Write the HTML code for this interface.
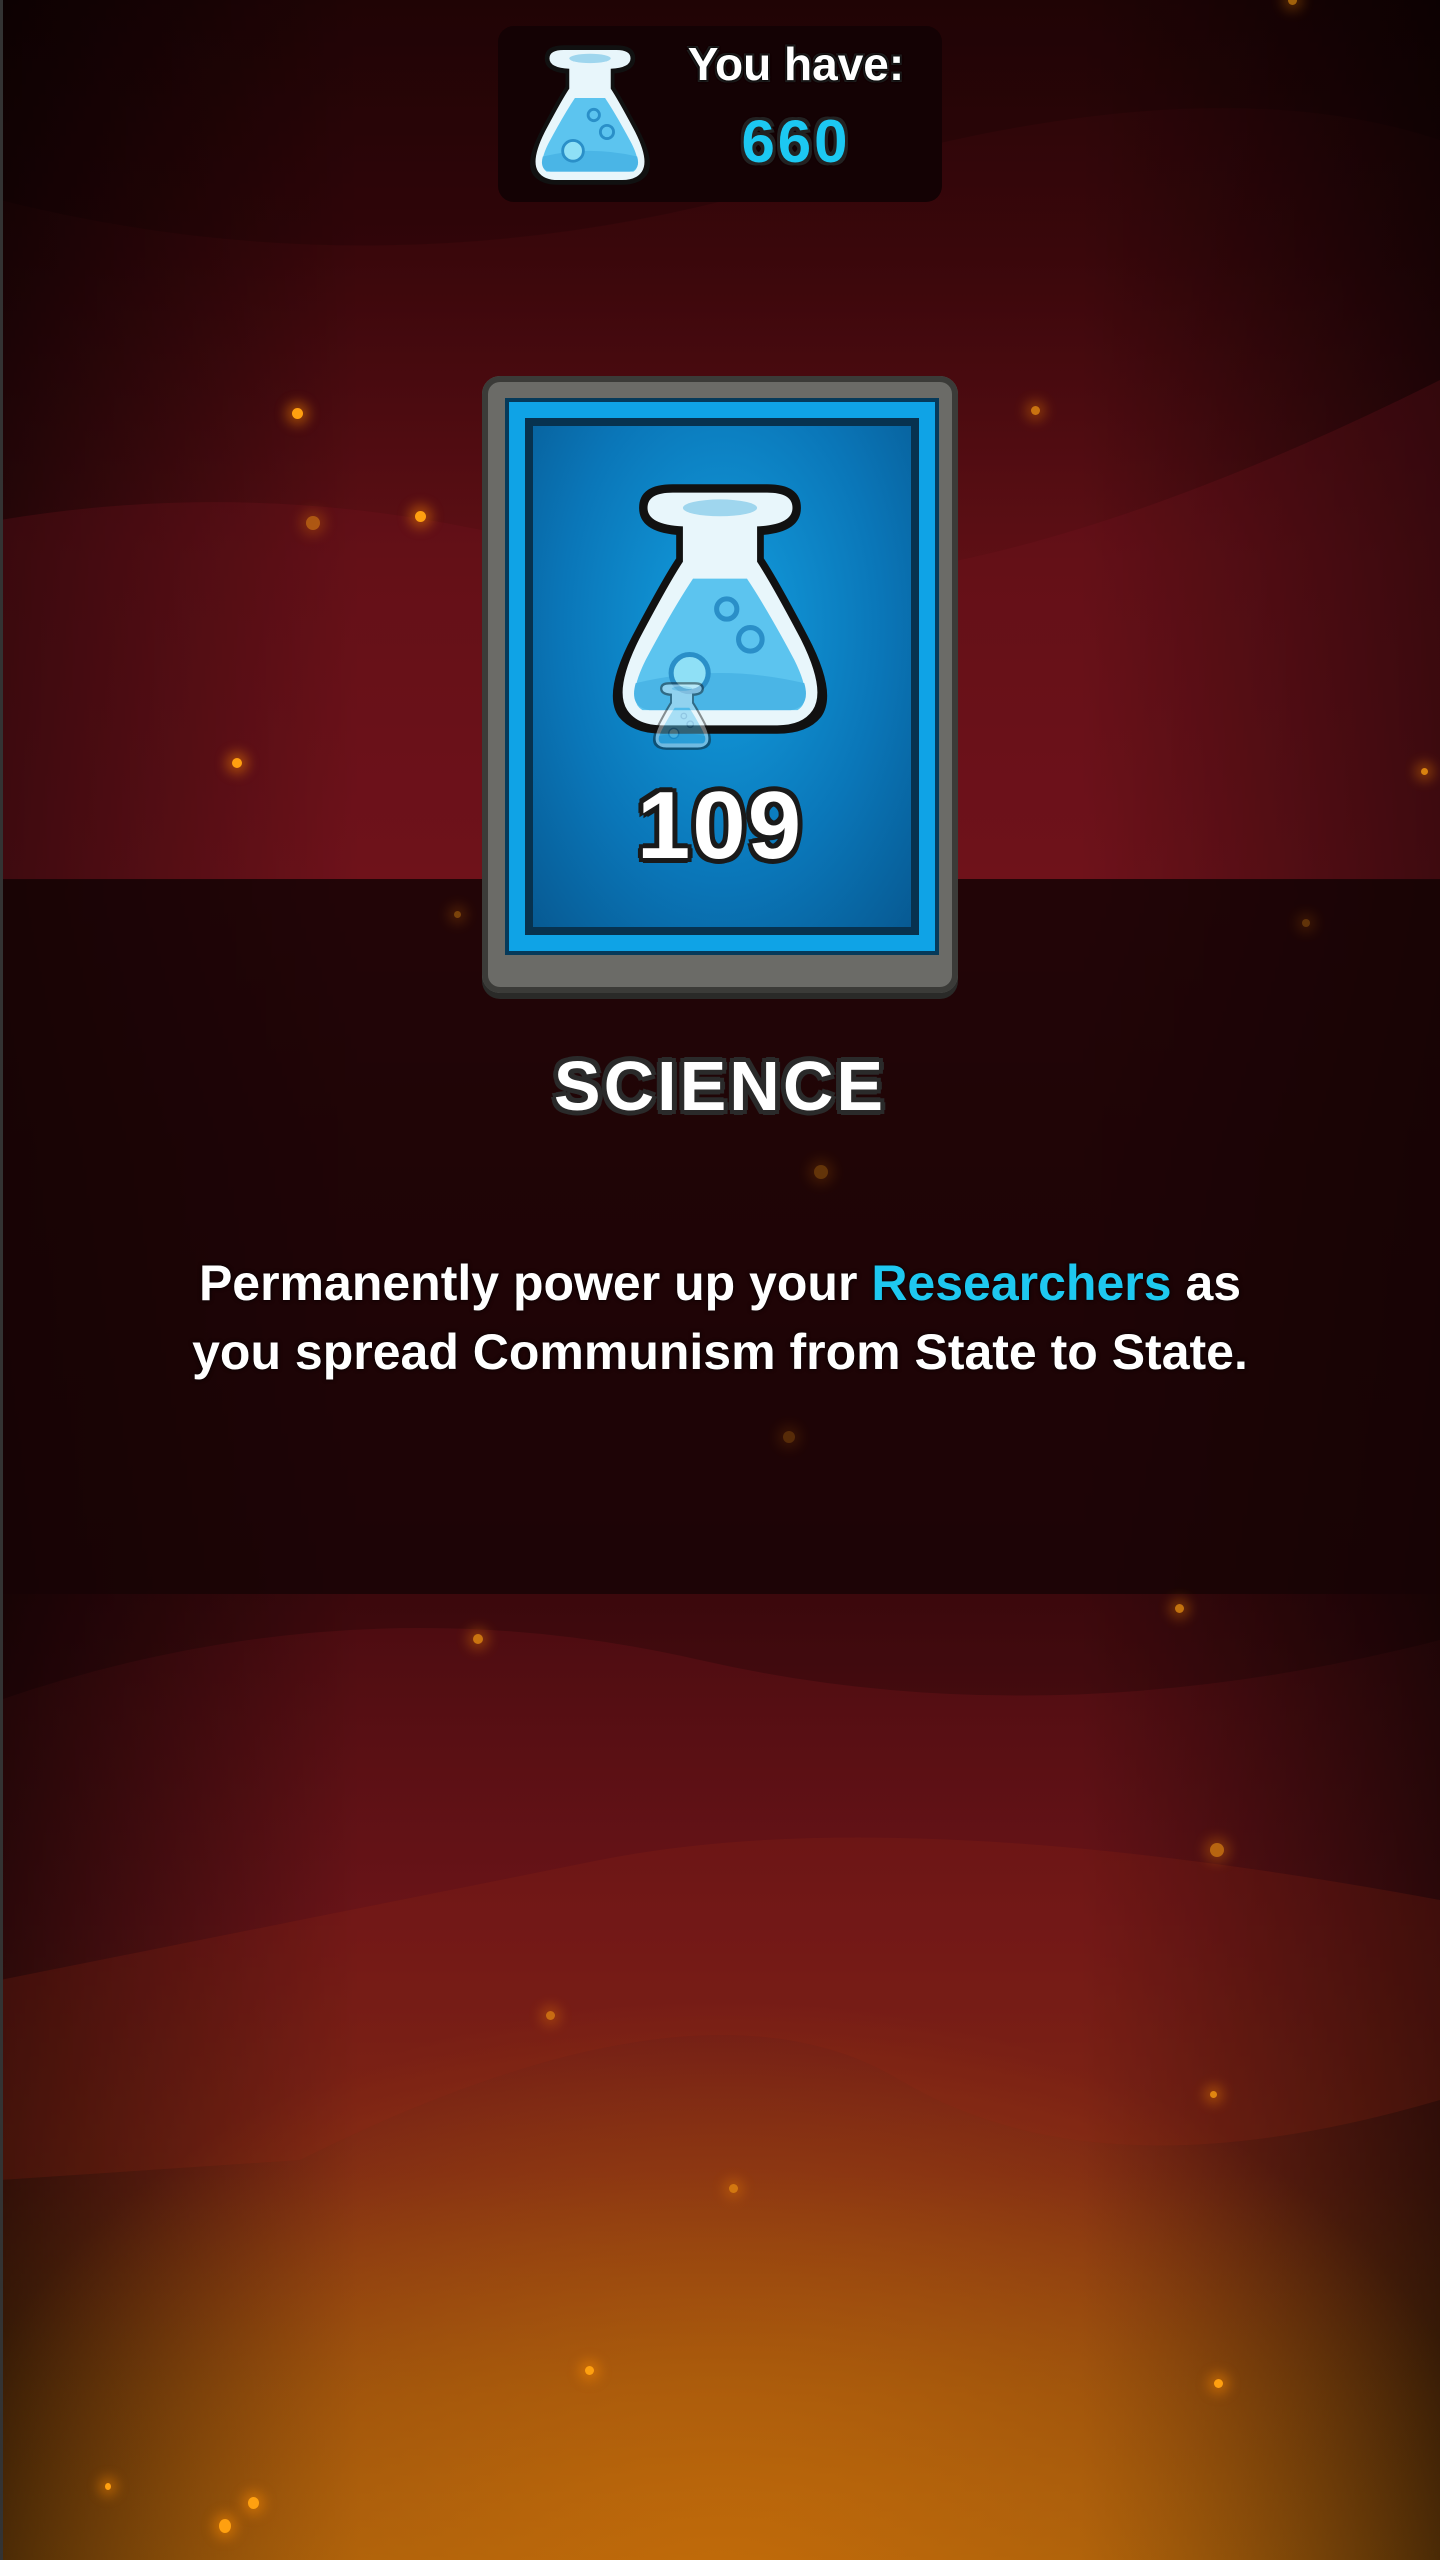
<!DOCTYPE html>
<html><head><meta charset="utf-8"><style>
html,body{margin:0;padding:0}
body{width:1440px;height:2560px;position:relative;overflow:hidden;font-family:"Liberation Sans",sans-serif;
background:
radial-gradient(ellipse 800px 600px at 720px 2600px, rgba(200,110,10,0.85), rgba(200,110,10,0) 100%),
linear-gradient(to right, rgba(0,0,0,0.6) 0%, rgba(0,0,0,0) 25%, rgba(0,0,0,0) 75%, rgba(0,0,0,0.6) 100%),
linear-gradient(to bottom,#260507 0%,#3a070b 10%,#5e0f15 22%,#6d1219 35%,#5a0e13 45%,#4a0b10 62%,#6a1418 75%,#7a2614 85%,#8a460e 93%,#9e5a0c 100%);}
.band{position:absolute;left:0;top:879px;width:1440px;height:715px;background:rgba(22,3,5,0.86)}
.edge{position:absolute;left:0;top:0;width:3px;height:2560px;background:#333}
.p{position:absolute;border-radius:50%;background:#ffa010;box-shadow:0 0 12px 6px rgba(255,140,0,0.45)}
.box{position:absolute;left:498px;top:26px;width:444px;height:176px;border-radius:16px;background:#140204}
.t{color:#fff;font-weight:bold;text-shadow:0 0 3px #000,0 0 3px #000,2px 2px 0 #222,-2px -2px 0 #222,2px -2px 0 #222,-2px 2px 0 #222}
.card{position:absolute;left:482px;top:376px;width:476px;height:617px;border-radius:18px;background:#6b6b67;box-shadow:inset 0 0 0 6px #3b3b38,0 6px 0 #2a2a28}
.b1{position:absolute;left:23px;top:22px;right:19px;bottom:38px;background:#0fa3e6;box-shadow:inset 0 0 0 4px #063a5a}
.b2{position:absolute;left:20px;top:20px;right:20px;bottom:20px;background:#07324f;padding:8px}
.b3{width:100%;height:100%;background:radial-gradient(ellipse at 50% 40%,#139fe0 0%,#0a76b8 60%,#075a93 100%)}
</style></head><body>
<svg width="0" height="0" style="position:absolute"><defs>
<symbol id="fl" viewBox="0 0 140 160">
<path d="M42 6 H98 Q118 6 118 20 Q118 34 96 36 V50 Q104 62 122 96 Q140 130 130 144 Q122 154 104 154 H36 Q18 154 10 144 Q0 130 18 96 Q36 62 44 50 V36 Q22 34 22 20 Q22 6 42 6 Z" fill="#111"/>
<path d="M42 11 H98 Q113 11 113 20 Q113 30 92 31 V52 Q100 64 118 98 Q133 128 125 140 Q119 149 104 149 H36 Q21 149 15 140 Q7 128 22 98 Q40 64 48 52 V31 Q27 30 27 20 Q27 11 42 11 Z" fill="#e8f6fb"/>
<ellipse cx="70" cy="20" rx="22" ry="5" fill="#9fd6ee"/>
<path d="M54 62 H86 Q98 80 114 110 Q126 134 116 140 H24 Q14 134 26 110 Q42 80 54 62 Z" fill="#5cc4ef"/>
<path d="M20 124 Q70 112 120 124 Q124 138 112 140 H28 Q16 138 20 124 Z" fill="#4ab5e6"/>
<circle cx="74" cy="80" r="6" fill="none" stroke="#2a8fc8" stroke-width="3"/>
<circle cx="88" cy="98" r="7" fill="none" stroke="#2a8fc8" stroke-width="3"/>
<circle cx="52" cy="118" r="11" fill="#8fe0f6" stroke="#2a8fc8" stroke-width="3"/>
</symbol></defs></svg>
<svg style="position:absolute;left:0;top:0" width="1440" height="2560">
<path d="M0 520 Q300 470 600 560 T1440 380 V880 H0Z" fill="rgba(120,20,30,0.25)"/>
<path d="M0 200 Q400 300 800 180 T1440 140 V0 H0Z" fill="rgba(0,0,0,0.15)"/>
<path d="M0 1700 Q350 1580 700 1660 T1440 1640 V1594 H0Z" fill="rgba(0,0,0,0.2)"/>
<path d="M0 1980 Q300 1920 600 1860 T1440 1900 V2100 Q1100 2200 900 2080 T300 2160 L0 2180Z" fill="rgba(150,40,20,0.2)"/>
</svg>
<div class="band"></div>
<div class="edge"></div>
<div class="p" style="left:292px;top:408px;width:11px;height:11px"></div>
<div class="p" style="left:415px;top:511px;width:11px;height:11px"></div>
<div class="p" style="left:306px;top:516px;width:14px;height:14px;opacity:.5"></div>
<div class="p" style="left:232px;top:758px;width:10px;height:10px"></div>
<div class="p" style="left:1031px;top:406px;width:9px;height:9px;opacity:.7"></div>
<div class="p" style="left:1421px;top:768px;width:7px;height:7px;opacity:.8"></div>
<div class="p" style="left:454px;top:911px;width:7px;height:7px;opacity:.4"></div>
<div class="p" style="left:1302px;top:919px;width:8px;height:8px;opacity:.3"></div>
<div class="p" style="left:814px;top:1165px;width:14px;height:14px;opacity:.3"></div>
<div class="p" style="left:783px;top:1431px;width:12px;height:12px;opacity:.25"></div>
<div class="p" style="left:473px;top:1634px;width:10px;height:10px;opacity:.7"></div>
<div class="p" style="left:1175px;top:1604px;width:9px;height:9px;opacity:.7"></div>
<div class="p" style="left:1210px;top:1843px;width:14px;height:14px;opacity:.6"></div>
<div class="p" style="left:546px;top:2011px;width:9px;height:9px;opacity:.6"></div>
<div class="p" style="left:1210px;top:2091px;width:7px;height:7px;opacity:.8"></div>
<div class="p" style="left:729px;top:2184px;width:9px;height:9px;opacity:.6"></div>
<div class="p" style="left:585px;top:2366px;width:9px;height:9px"></div>
<div class="p" style="left:1214px;top:2379px;width:9px;height:9px"></div>
<div class="p" style="left:248px;top:2497px;width:11px;height:12px"></div>
<div class="p" style="left:219px;top:2519px;width:12px;height:14px"></div>
<div class="p" style="left:105px;top:2483px;width:6px;height:7px"></div>
<div class="p" style="left:1288px;top:-4px;width:9px;height:9px;opacity:.6"></div>

<div class="box">
<svg style="position:absolute;left:26px;top:10px" width="132" height="158"><use href="#fl"/></svg>
<div class="t" style="position:absolute;left:178px;top:8px;width:240px;text-align:center;font-size:46px;line-height:60px">You have:</div>
<div style="position:absolute;left:178px;top:80px;width:240px;text-align:center;font-size:60px;line-height:72px;font-weight:bold;color:#1cc8f2;letter-spacing:3px;text-shadow:3px 3px 0 #222,-3px -3px 0 #222,3px -3px 0 #222,-3px 3px 0 #222,0 0 4px #000">660</div>
</div>

<div class="card"><div class="b1"><div class="b2"><div class="b3"></div></div></div>
<svg style="position:absolute;left:120px;top:92px" width="236" height="282"><use href="#fl"/></svg>
<svg style="position:absolute;left:168px;top:302px;opacity:.45" width="64" height="76"><use href="#fl"/></svg>
<div class="t" style="position:absolute;left:0;width:476px;top:398px;text-align:center;font-size:96px;line-height:104px;letter-spacing:2px;text-shadow:4px 4px 0 #1a1a1a,-4px -4px 0 #1a1a1a,4px -4px 0 #1a1a1a,-4px 4px 0 #1a1a1a,0 5px 0 #1a1a1a,5px 0 0 #1a1a1a,-5px 0 0 #1a1a1a,0 -5px 0 #1a1a1a">109</div>
</div>

<div class="t" style="position:absolute;left:0;width:1440px;top:1046px;text-align:center;font-size:70px;line-height:80px;letter-spacing:3px;text-shadow:4px 4px 0 #2a2a2a,-4px -4px 0 #2a2a2a,4px -4px 0 #2a2a2a,-4px 4px 0 #2a2a2a,5px 0 0 #2a2a2a,-5px 0 0 #2a2a2a,0 5px 0 #2a2a2a,0 -5px 0 #2a2a2a">SCIENCE</div>

<div style="position:absolute;left:0;width:1440px;top:1249px;text-align:center;font-size:50px;line-height:69px;font-weight:bold;color:#fff;text-shadow:0 0 4px #000">Permanently power up your <span style="color:#1ec8f0">Researchers</span> as<br>you spread Communism from State to State.</div>
</body></html>
